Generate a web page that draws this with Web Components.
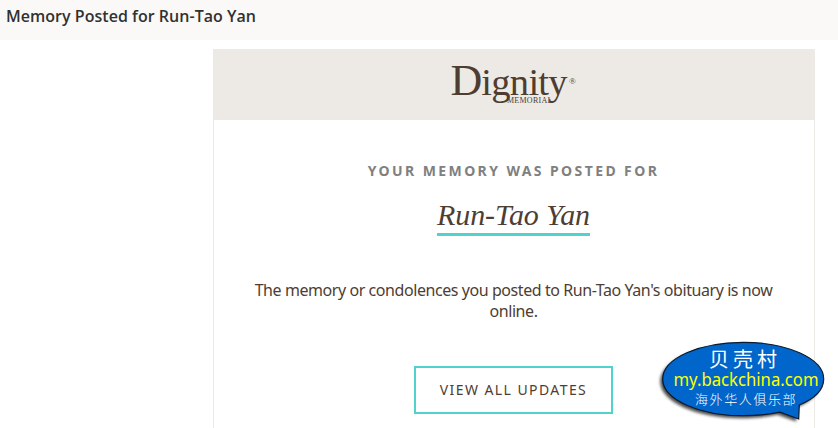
<!DOCTYPE html>
<html lang="en">
<head>
<meta charset="utf-8">
<title>Memory Posted for Run-Tao Yan</title>
<style>
  body {
    margin: 0;
    height: 428px;
    overflow: hidden;
    background: #fff;
    font-family: "Noto Sans", "Open Sans", sans-serif;
    color: #4e3d32;
  }
</style>
</head>
<body>
<mail-view>
  <mail-subject slot="subject">Memory Posted for Run-Tao Yan</mail-subject>
  <memorial-card>
    <dignity-logo slot="logo"></dignity-logo>
    <span slot="kicker">YOUR MEMORY WAS POSTED FOR</span>
    <span slot="name">Run-Tao Yan</span>
    <span slot="message">The memory or condolences you posted to Run-Tao Yan's obituary is now online.</span>
    <outline-button slot="action">VIEW ALL UPDATES</outline-button>
  </memorial-card>
</mail-view>
<site-badge></site-badge>

<script>
'use strict'

class BaseElement extends HTMLElement {
  constructor () {
    super()
    const template = document.createElement('template')
    template.innerHTML = this.template()
    this.root = this.attachShadow({ mode: 'open' })
    this.root.appendChild(template.content.cloneNode(true))
  }
}

customElements.define('mail-view', class extends BaseElement {
  template () {
    return `
    <style>
      :host { display: flex; flex-direction: column; }
      main { padding: 9px 0 0 213px; }
    </style>
    <slot name="subject"></slot>
    <main><slot></slot></main>
    `
  }
})

customElements.define('mail-subject', class extends BaseElement {
  template () {
    return `
    <style>
      :host {
        display: block;
        box-sizing: border-box;
        height: 40px;
        padding-left: 6px;
        background: #faf9f8;
        color: #323130;
        font: 600 16px/33px "Open Sans", "Noto Sans", sans-serif;
        letter-spacing: 0.03px;
      }
    </style>
    <slot></slot>
    `
  }
})

customElements.define('memorial-card', class extends BaseElement {
  template () {
    return `
    <style>
      :host {
        display: block;
        box-sizing: border-box;
        width: 602px;
        height: 400px;
        border: 1px solid #edeae5;
        border-top: 0;
        text-align: center;
      }
      header {
        display: flex;
        justify-content: center;
        height: 71px;
        background: #edeae5;
      }
      section {
        display: flex;
        flex-direction: column;
        align-items: center;
        padding-right: 1px;
      }
      .kicker {
        margin-top: 41px;
        color: #808080;
        font-size: 14px;
        font-weight: 700;
        line-height: 20px;
        letter-spacing: 2.4px;
        white-space: nowrap;
      }
      .name {
        margin-top: 17px;
        height: 35px;
        border-bottom: 3px solid #50d3ca;
        font: italic 30px/34px "Liberation Serif", serif;
        letter-spacing: -0.05px;
        white-space: nowrap;
      }
      .message {
        width: 540px;
        margin: 44px 0 0;
        font-size: 16px;
        line-height: 21px;
        letter-spacing: -0.43px;
      }
      .action { margin-top: 44px; }
    </style>
    <header><slot name="logo"></slot></header>
    <section>
      <div class="kicker"><slot name="kicker"></slot></div>
      <div class="name"><slot name="name"></slot></div>
      <p class="message"><slot name="message"></slot></p>
      <div class="action"><slot name="action"></slot></div>
    </section>
    `
  }
})

customElements.define('dignity-logo', class extends BaseElement {
  template () {
    return `
    <style>
      :host { display: block; width: 130px; height: 71px; }
      svg { display: block; overflow: visible; font-family: "Liberation Serif", serif; }
      .word { font-size: 38.5px; letter-spacing: -0.7px; }
      .cap { font-size: 44px; letter-spacing: -1px; }
      .sub { font-size: 8px; letter-spacing: 0.25px; }
    </style>
    <svg width="130" height="71" viewBox="449 49 130 71" fill="#4e3d31">
      <text class="word" x="450.5" y="94.5"><tspan class="cap">D</tspan>ignity</text>
      <text class="sub" x="507" y="102.5">MEMORIAL</text>
      <text x="569" y="84" font-size="9">®</text>
    </svg>
    `
  }
})

customElements.define('outline-button', class extends BaseElement {
  template () {
    return `
    <style>
      :host {
        display: block;
        box-sizing: border-box;
        width: 199px;
        height: 48px;
        border: 2px solid #50d3ca;
        font-size: 14px;
        line-height: 44px;
        letter-spacing: 1.42px;
        white-space: nowrap;
      }
    </style>
    <slot></slot>
    `
  }
})

customElements.define('site-badge', class extends BaseElement {
  template () {
    return `
    <style>
      :host { display: block; position: absolute; left: 650px; top: 335px; }
      svg { display: block; font-family: "Noto Sans", "Noto Sans CJK SC", sans-serif; }
    </style>
    <svg width="188" height="93" viewBox="650 335 188 93">
      <defs>
        <filter id="blur"><feGaussianBlur stdDeviation="1.5"/></filter>
        <path id="bubble" d="M799.3 405 L798.7 419 L780 412.2 C768 414.6 756 415.7 743.2 415.7 C698.7 415.7 662.7 399.3 662.7 379 C662.7 358.7 698.7 342.3 743.2 342.3 C787.7 342.3 823.7 358.7 823.7 379 C823.7 389.5 814.5 398.7 799.3 405 Z"/>
      </defs>
      <use href="#bubble" x="-2.5" y="2.5" fill="#000" opacity=".7" filter="url(#blur)"/>
      <use href="#bubble" fill="#0066cb" stroke="#0b1a2c" stroke-width="1.2"/>
      <text x="709" y="366.5" font-size="20" fill="#fff" letter-spacing="4">贝壳村</text>
      <text x="673.5" y="386" font-size="17.5" fill="#ff0" textLength="145" lengthAdjust="spacingAndGlyphs">my.backchina.com</text>
      <text x="695" y="404" font-size="13" font-weight="300" fill="#fff" letter-spacing="1.6">海外华人俱乐部</text>
    </svg>
    `
  }
})
</script>
</body>
</html>
